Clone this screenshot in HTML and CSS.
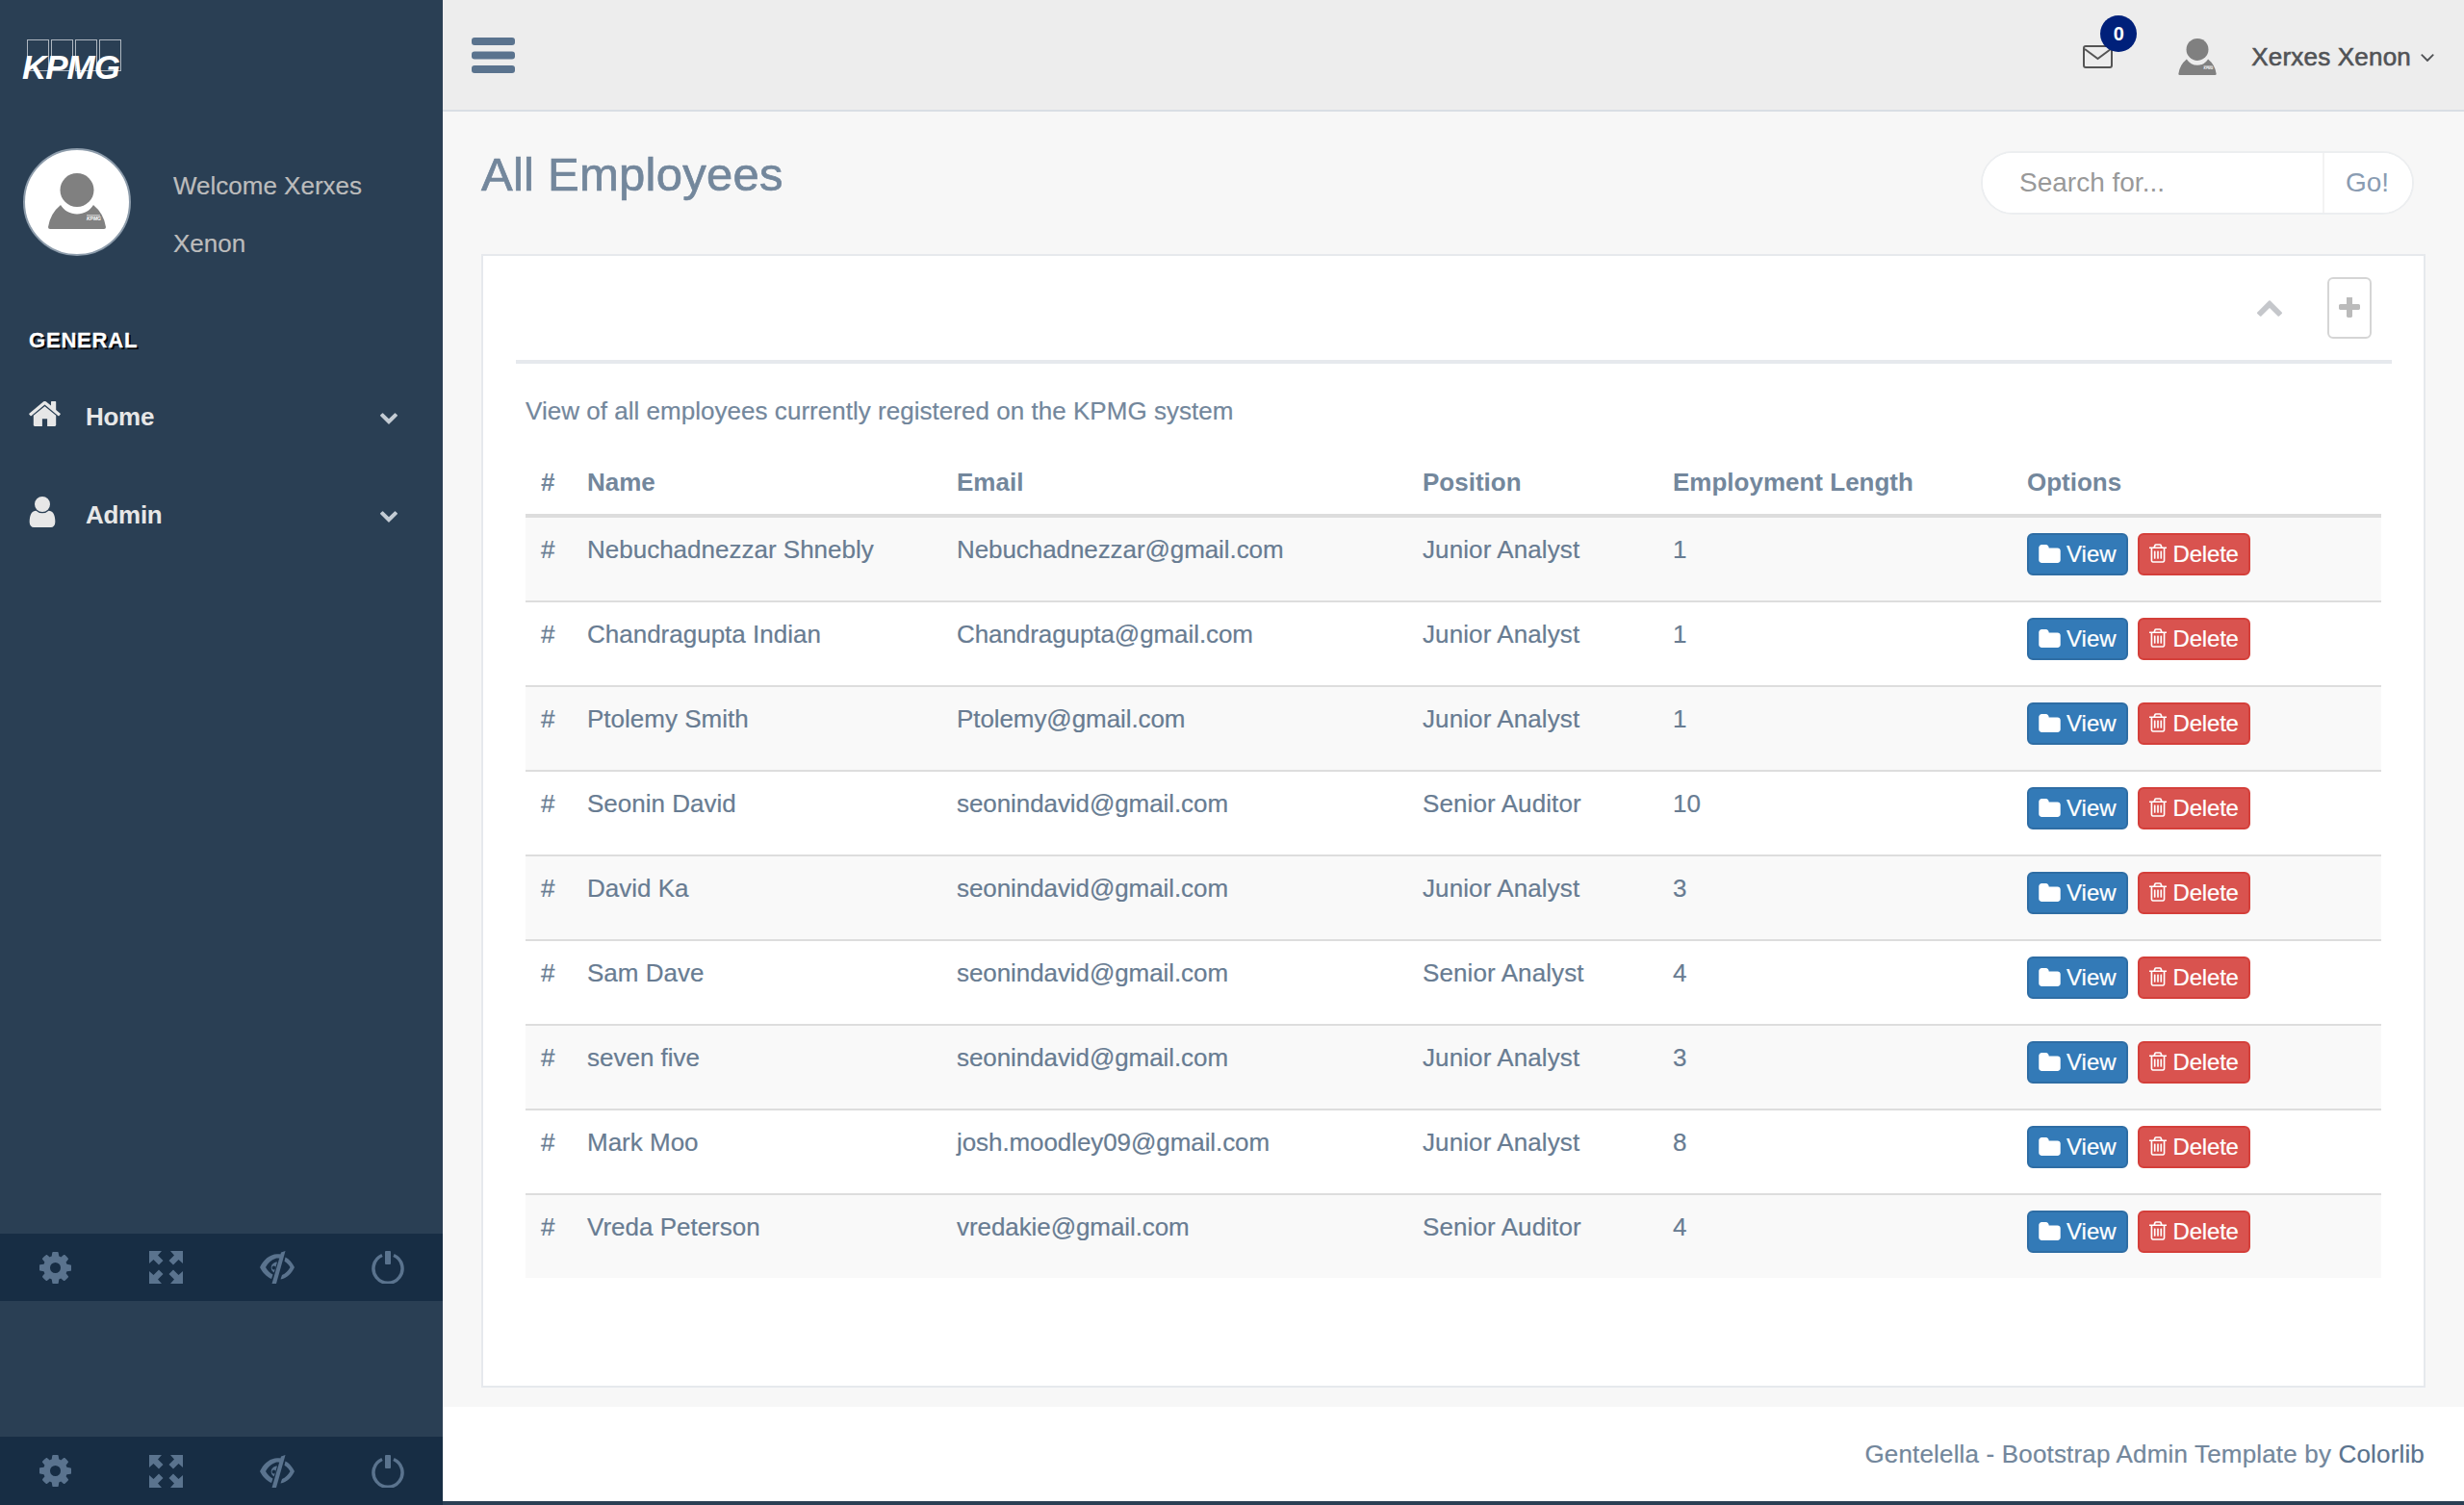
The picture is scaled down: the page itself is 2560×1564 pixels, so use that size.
FILE: index.html
```html
<!DOCTYPE html>
<html lang="en">
<head>
    <meta charset="UTF-8">
    <meta name="viewport" content="width=device-width, initial-scale=1.0">
    <title>All Employees</title>
    <link rel="stylesheet" href="styles.css">
</head>
<body>

    <!-- icon set -->
    <svg class="icon-defs" xmlns="http://www.w3.org/2000/svg">
        <symbol id="i-home" viewBox="90 256 1612 1280"><path d="M1472 992v480q0 26-19 45t-45 19h-384v-384h-256v384h-384q-26 0-45-19t-19-45v-480q0-1 .5-3t.5-3l575-474 575 474q1 2 1 6zm223-69l-62 74q-8 9-21 11h-3q-13 0-21-7l-692-577-692 577q-12 8-24 7-13-2-21-11l-62-74q-8-10-7-23.5t11-21.5l719-599q32-26 76-26t76 26l244 204v-195q0-14 9-23t23-9h192q14 0 23 9t9 23v408l219 182q10 8 11 21.5t-7 23.5z"/></symbol>
        <symbol id="i-user" viewBox="256 128 1280 1536"><path d="M1536 1399q0 109-62.5 187t-150.5 78h-854q-88 0-150.5-78t-62.5-187q0-85 8.5-160.5t31.5-152 58.5-131 94-89 134.5-34.5q131 128 313 128t313-128q76 0 134.5 34.5t94 89 58.5 131 31.5 152 8.5 160.5zm-256-887q0 159-112.5 271.5t-271.5 112.5-271.5-112.5-112.5-271.5 112.5-271.5 271.5-112.5 271.5 112.5 112.5 271.5z"/></symbol>
        <symbol id="i-chevron-down" viewBox="90 533 1612 1035"><path d="M1683 808l-742 741q-19 19-45 19t-45-19l-742-741q-19-19-19-45.5t19-45.5l166-165q19-19 45-19t45 19l531 531 531-531q19-19 45-19t45 19l166 165q19 19 19 45.5t-19 45.5z"/></symbol>
        <symbol id="i-chevron-up" viewBox="90 480 1612 1035"><path d="M1683 1331l-166 165q-19 19-45 19t-45-19l-531-531-531 531q-19 19-45 19t-45-19l-166-165q-19-19-19-45.5t19-45.5l742-741q19-19 45-19t45 19l742 741q19 19 19 45.5t-19 45.5z"/></symbol>
        <symbol id="i-angle-down" viewBox="380 570 1032 660"><path d="M1395 736q0 13-10 23l-466 466q-10 10-23 10t-23-10l-466-466q-10-10-10-23t10-23l50-50q10-10 23-10t23 10l393 393 393-393q10-10 23-10t23 10l50 50q10 10 10 23z"/></symbol>
        <symbol id="i-bars" viewBox="0 0 45 37">
            <rect x="0" y="0" width="45" height="8" rx="3"/>
            <rect x="0" y="14.500" width="45" height="8" rx="3"/>
            <rect x="0" y="29" width="45" height="8" rx="3"/>
        </symbol>
        <symbol id="i-plus" viewBox="192 192 1408 1408"><path d="M1600 736v192q0 40-28 68t-68 28h-416v416q0 40-28 68t-68 28h-192q-40 0-68-28t-28-68v-416h-416q-40 0-68-28t-28-68v-192q0-40 28-68t68-28h416v-416q0-40 28-68t68-28h192q40 0 68 28t28 68v416h416q40 0 68 28t28 68z"/></symbol>
        <symbol id="i-folder" viewBox="64 128 1664 1408"><path d="M1728 608v704q0 92-66 158t-158 66h-1216q-92 0-158-66t-66-158v-960q0-92 66-158t158-66h320q92 0 158 66t66 158v32h672q92 0 158 66t66 158z"/></symbol>
        <symbol id="i-trash" viewBox="192 128 1408 1536"><path d="M704 736v576q0 14-9 23t-23 9h-64q-14 0-23-9t-9-23v-576q0-14 9-23t23-9h64q14 0 23 9t9 23zm256 0v576q0 14-9 23t-23 9h-64q-14 0-23-9t-9-23v-576q0-14 9-23t23-9h64q14 0 23 9t9 23zm256 0v576q0 14-9 23t-23 9h-64q-14 0-23-9t-9-23v-576q0-14 9-23t23-9h64q14 0 23 9t9 23zm128 724v-948h-896v948q0 22 7 40.5t14.5 27 10.5 8.5h832q3 0 10.5-8.5t14.5-27 7-40.5zm-672-1076h448l-48-117q-7-9-17-11h-317q-10 2-17 11zm928 32v64q0 14-9 23t-23 9h-96v948q0 83-47 143.5t-113 60.5h-832q-66 0-113-58.5t-47-141.5v-952h-96q-14 0-23-9t-9-23v-64q0-14 9-23t23-9h309l70-167q15-37 54-63t79-26h320q40 0 79 26t54 63l70 167h309q14 0 23 9t9 23z"/></symbol>
        <symbol id="i-cog" viewBox="128 128 1536 1536"><path d="M1152 896q0-106-75-181t-181-75-181 75-75 181 75 181 181 75 181-75 75-181zm512-109v222q0 12-8 23t-20 13l-185 28q-19 54-39 91 35 50 107 138 10 12 10 25t-9 23q-27 37-99 108t-94 71q-12 0-26-9l-138-108q-44 23-91 38-16 136-29 186-7 28-36 28h-222q-14 0-24.5-8.5t-11.5-21.5l-28-184q-49-16-90-37l-141 107q-10 9-25 9-14 0-25-11-126-114-165-168-7-10-7-23 0-12 8-23 15-21 51-66.5t54-70.5q-27-50-41-99l-183-27q-13-2-21-12.5t-8-23.5v-222q0-12 8-23t19-13l186-28q14-46 39-92-40-57-107-138-10-12-10-24 0-10 9-23 26-36 98.5-107.5t94.5-71.5q13 0 26 10l138 107q44-23 91-38 16-136 29-186 7-28 36-28h222q14 0 24.5 8.5t11.5 21.5l28 184q49 16 90 37l142-107q9-9 24-9 13 0 25 10 129 119 165 170 7 8 7 22 0 12-8 23-15 21-51 66.5t-54 70.5q26 50 41 98l183 28q13 2 21 12.5t8 23.5z"/></symbol>
        <symbol id="i-fullscreen" viewBox="0 0 35 34">
            <path d="M0 0h13l-4 4.500 5.500 5.500-4.500 4.500-5.500-5.500-4.500 4z"/>
            <path d="M35 0h-13l4 4.500-5.500 5.500 4.500 4.500 5.500-5.500 4.500 4z"/>
            <path d="M0 34h13l-4-4.500 5.500-5.500-4.500-4.500-5.500 5.500-4.500-4z"/>
            <path d="M35 34h-13l4-4.500-5.500-5.500 4.500-4.500 5.500 5.500 4.500-4z"/>
        </symbol>
        <symbol id="i-eye-close" viewBox="0 0 36 34">
            <path fill-rule="evenodd" d="M22 3.500l-1.300 4.500c-1.500-.5-3-.6-4.700 0-4 1.200-7.500 4.500-10 9 2 3.500 4.500 6 7.500 7.500l-1.400 4.500c-5-2-9.300-6.500-12.100-12 3.500-7.500 10-13.500 18-13.700 1.500 0 3 0 4 .2zm-6.500 8.500c-2.500 1-4 3.200-3.800 5.800.2 2 1.300 3.700 3 4.700l3.300-11c-.8 0-1.700 0-2.500.5zm-1 3.500a2 2 0 1 0 2 2 2 2 0 0 0-2-2z"/>
            <path d="M26.500 0l-9.500 34h-4.500l9.500-32.500z"/>
            <path d="M26.500 6.500c4 2 7.300 6 9.500 10.500-3 6.500-8 11.500-14.500 12.500l1.500-4.500c3.500-1.500 6.500-4.300 8.500-8-1.500-2.600-3.500-4.800-6-6.200z"/>
        </symbol>
        <symbol id="i-power" viewBox="0 0 34 34">
            <path d="M11 4.500a15 15 0 1 0 12 0" fill="none" stroke="currentColor" stroke-width="3.500"/>
            <rect x="14" y="0" width="6" height="14" rx="1"/>
        </symbol>
        <symbol id="i-envelope" viewBox="0 0 31 24">
            <rect x="1" y="1" width="29" height="22" rx="2" fill="none" stroke="currentColor" stroke-width="2"/>
            <path d="M2 4l13.500 10L29 4" fill="none" stroke="currentColor" stroke-width="2"/>
        </symbol>
        <symbol id="i-person" viewBox="0 0 60 58">
            <circle cx="30" cy="17.500" r="17.500"/>
            <path d="M0 56Q2 42 13 33A20 20 0 0 0 47 33Q58 42 60 56Q60 58 58 58H2Q0 58 0 56Z"/>
            <rect x="40" y="43" width="14" height="1.500" fill="#fff" opacity=".5"/>
            <text x="40" y="49" class="tiny-logo">KPMG</text>
        </symbol>
    </svg>

    <div class="layout">

        <aside class="sidebar">
            <div class="logo">
                <svg width="110" height="50" viewBox="0 0 110 50">
                    <g class="logo-boxes">
                        <rect x="6.500" y="0.500" width="22" height="32"/>
                        <rect x="31.500" y="0.500" width="22" height="32"/>
                        <rect x="56.500" y="0.500" width="22" height="32"/>
                        <rect x="81.500" y="0.500" width="22" height="32"/>
                    </g>
                    <text x="1" y="41" class="logo-text">KPMG</text>
                </svg>
            </div>

            <div class="profile">
                <div class="avatar">
                    <svg class="avatar-person"><use href="#i-person"/></svg>
                </div>
                <div class="welcome">Welcome Xerxes Xenon</div>
            </div>

            <h3 class="menu-title">General</h3>
            <ul class="side-menu">
                <li>
                    <svg class="menu-icon home"><use href="#i-home"/></svg>
                    <span>Home</span>
                    <svg class="menu-chevron"><use href="#i-chevron-down"/></svg>
                </li>
                <li>
                    <svg class="menu-icon user"><use href="#i-user"/></svg>
                    <span>Admin</span>
                    <svg class="menu-chevron"><use href="#i-chevron-down"/></svg>
                </li>
            </ul>

            <div class="sidebar-footer first">
                <a><svg class="ft-cog"><use href="#i-cog"/></svg></a>
                <a><svg class="ft-full"><use href="#i-fullscreen"/></svg></a>
                <a><svg class="ft-eye"><use href="#i-eye-close"/></svg></a>
                <a><svg class="ft-power"><use href="#i-power"/></svg></a>
            </div>
            <div class="sidebar-footer last">
                <a><svg class="ft-cog"><use href="#i-cog"/></svg></a>
                <a><svg class="ft-full"><use href="#i-fullscreen"/></svg></a>
                <a><svg class="ft-eye"><use href="#i-eye-close"/></svg></a>
                <a><svg class="ft-power"><use href="#i-power"/></svg></a>
            </div>
        </aside>

        <div class="main">
            <header class="topbar">
                <svg class="toggle"><use href="#i-bars"/></svg>
                <div class="top-right">
                    <div class="mail">
                        <svg class="mail-icon"><use href="#i-envelope"/></svg>
                        <span class="badge">0</span>
                    </div>
                    <svg class="top-person"><use href="#i-person"/></svg>
                    <span class="top-name">Xerxes Xenon</span>
                    <svg class="top-angle"><use href="#i-angle-down"/></svg>
                </div>
            </header>

            <main class="content">
                <div class="page-title">
                    <h1>All Employees</h1>
                    <div class="search">
                        <input type="text" placeholder="Search for...">
                        <button>Go!</button>
                    </div>
                </div>

                <section class="panel">
                    <div class="panel-toolbar">
                        <svg class="collapse"><use href="#i-chevron-up"/></svg>
                        <div class="add-box"><svg><use href="#i-plus"/></svg></div>
                    </div>
                    <div class="panel-body">
                        <p class="lead">View of all employees currently registered on the KPMG system</p>
                        <table class="employees">
                            <colgroup>
                                <col class="c-num"><col class="c-name"><col class="c-email"><col class="c-pos"><col class="c-len"><col class="c-opt">
                            </colgroup>
                            <thead>
                                <tr><th>#</th><th>Name</th><th>Email</th><th>Position</th><th>Employment Length</th><th>Options</th></tr>
                            </thead>
                            <tbody>
                                <tr>
                                    <td>#</td><td>Nebuchadnezzar Shnebly</td><td>Nebuchadnezzar@gmail.com</td><td>Junior Analyst</td><td>1</td>
                                    <td><a class="btn btn-view"><svg><use href="#i-folder"/></svg>View</a><a class="btn btn-delete"><svg><use href="#i-trash"/></svg>Delete</a></td>
                                </tr>
                                <tr>
                                    <td>#</td><td>Chandragupta Indian</td><td>Chandragupta@gmail.com</td><td>Junior Analyst</td><td>1</td>
                                    <td><a class="btn btn-view"><svg><use href="#i-folder"/></svg>View</a><a class="btn btn-delete"><svg><use href="#i-trash"/></svg>Delete</a></td>
                                </tr>
                                <tr>
                                    <td>#</td><td>Ptolemy Smith</td><td>Ptolemy@gmail.com</td><td>Junior Analyst</td><td>1</td>
                                    <td><a class="btn btn-view"><svg><use href="#i-folder"/></svg>View</a><a class="btn btn-delete"><svg><use href="#i-trash"/></svg>Delete</a></td>
                                </tr>
                                <tr>
                                    <td>#</td><td>Seonin David</td><td>seonindavid@gmail.com</td><td>Senior Auditor</td><td>10</td>
                                    <td><a class="btn btn-view"><svg><use href="#i-folder"/></svg>View</a><a class="btn btn-delete"><svg><use href="#i-trash"/></svg>Delete</a></td>
                                </tr>
                                <tr>
                                    <td>#</td><td>David Ka</td><td>seonindavid@gmail.com</td><td>Junior Analyst</td><td>3</td>
                                    <td><a class="btn btn-view"><svg><use href="#i-folder"/></svg>View</a><a class="btn btn-delete"><svg><use href="#i-trash"/></svg>Delete</a></td>
                                </tr>
                                <tr>
                                    <td>#</td><td>Sam Dave</td><td>seonindavid@gmail.com</td><td>Senior Analyst</td><td>4</td>
                                    <td><a class="btn btn-view"><svg><use href="#i-folder"/></svg>View</a><a class="btn btn-delete"><svg><use href="#i-trash"/></svg>Delete</a></td>
                                </tr>
                                <tr>
                                    <td>#</td><td>seven five</td><td>seonindavid@gmail.com</td><td>Junior Analyst</td><td>3</td>
                                    <td><a class="btn btn-view"><svg><use href="#i-folder"/></svg>View</a><a class="btn btn-delete"><svg><use href="#i-trash"/></svg>Delete</a></td>
                                </tr>
                                <tr>
                                    <td>#</td><td>Mark Moo</td><td>josh.moodley09@gmail.com</td><td>Junior Analyst</td><td>8</td>
                                    <td><a class="btn btn-view"><svg><use href="#i-folder"/></svg>View</a><a class="btn btn-delete"><svg><use href="#i-trash"/></svg>Delete</a></td>
                                </tr>
                                <tr>
                                    <td>#</td><td>Vreda Peterson</td><td>vredakie@gmail.com</td><td>Senior Auditor</td><td>4</td>
                                    <td><a class="btn btn-view"><svg><use href="#i-folder"/></svg>View</a><a class="btn btn-delete"><svg><use href="#i-trash"/></svg>Delete</a></td>
                                </tr>
                            </tbody>
                        </table>
                    </div>
                </section>
            </main>

            <footer class="footer">
                <span>Gentelella - Bootstrap Admin Template by <a>Colorlib</a></span>
            </footer>
        </div>

    </div>

</body>
</html>
```

FILE: styles.css
```css
* {
    box-sizing: border-box;
}

body {
    margin: 0;
    background: #2a3f54;
    color: #73879c;
    font-family: "Liberation Sans", Arial, sans-serif;
    font-size: 26px;
    line-height: 37px;
}

svg {
    display: block;
    fill: currentColor;
}

.icon-defs {
    display: none;
}

.layout {
    display: flex;
    height: 1564px;
}

/* sidebar */

.sidebar {
    display: flex;
    flex-direction: column;
    flex: 0 0 460px;
    background: #2a3f54;
}

.logo {
    height: 154px;
    padding: 41px 0 0 22px;
}

.logo-boxes rect {
    fill: none;
    stroke: #aeb7c0;
    stroke-width: 1;
}

.logo-text {
    fill: #fff;
    font-size: 35px;
    font-weight: bold;
    font-style: italic;
    letter-spacing: -1px;
}

.tiny-logo {
    fill: #fff;
    font-size: 5px;
    font-weight: bold;
    font-style: italic;
}

.profile {
    display: flex;
    gap: 44px;
    padding-left: 24px;
}

.avatar {
    display: flex;
    align-items: center;
    justify-content: center;
    width: 112px;
    height: 112px;
    border: 2px solid #8d9cab;
    border-radius: 50%;
    background: #fff;
    color: #808080;
    padding-bottom: 2px;
}

.avatar-person {
    width: 60px;
    height: 58px;
}

.welcome {
    width: 210px;
    margin-top: 9px;
    color: #bcbcbc;
    line-height: 60px;
    -webkit-text-stroke: 0.2px #bcbcbc;
}

.menu-title {
    margin: 56px 0 13px 30px;
    color: #fff;
    font-size: 22px;
    line-height: 30px;
    font-weight: bold;
    letter-spacing: 0.8px;
    text-transform: uppercase;
    text-shadow: 2px 2px #000;
    -webkit-text-stroke: 0.3px #fff;
}

.side-menu {
    margin: 0;
    padding: 0;
    list-style: none;
}

.side-menu li {
    display: flex;
    align-items: center;
    height: 102px;
    padding: 0 47px 0 30px;
    color: #e7e7e7;
    font-weight: bold;
    letter-spacing: -0.3px;
}

.menu-icon {
    flex: 0 0 auto;
}

.menu-icon.home {
    width: 33px;
    height: 26px;
    margin: -6px 26px 0 0;
}

.menu-icon.user {
    width: 28px;
    height: 32px;
    margin: -6px 31px 0 0;
}

.menu-chevron {
    width: 18px;
    height: 12px;
    margin: 3px 0 0 auto;
    color: #c4ccd4;
}

.sidebar-footer {
    display: flex;
    background: #172d44;
    color: #5a738e;
}

.sidebar-footer.first {
    height: 70px;
    margin-top: auto;
}

.sidebar-footer.last {
    height: 71px;
    margin-top: 141px;
}

.sidebar-footer a {
    display: flex;
    flex: 1;
    align-items: center;
    justify-content: center;
}

.ft-cog {
    width: 33px;
    height: 33px;
}

.ft-full {
    width: 35px;
    height: 34px;
}

.ft-eye {
    width: 36px;
    height: 34px;
}

.ft-power {
    width: 34px;
    height: 34px;
}

/* main column */

.main {
    display: flex;
    flex-direction: column;
    flex: 1;
    height: 1560px;
    min-width: 0;
}

.topbar {
    display: flex;
    align-items: center;
    flex: 0 0 116px;
    padding: 4px 31px 0 30px;
    background: #ededed;
    border-bottom: 2px solid #d9dee4;
}

.toggle {
    width: 45px;
    height: 37px;
    margin-top: -4px;
    color: #5a738e;
}

.top-right {
    display: flex;
    align-items: center;
    margin-left: auto;
    color: #515356;
}

.mail {
    position: relative;
    margin-right: 68px;
}

.mail-icon {
    width: 31px;
    height: 24px;
    color: #555;
}

.badge {
    position: absolute;
    left: 18px;
    top: -31px;
    width: 38px;
    height: 38px;
    border-radius: 50%;
    background: #00207a;
    color: #fff;
    font-size: 20px;
    font-weight: bold;
    line-height: 38px;
    text-align: center;
}

.top-person {
    width: 40px;
    height: 38px;
    margin-right: 36px;
    color: #808080;
}

.top-name {
    margin-right: 10px;
    letter-spacing: 0.2px;
    -webkit-text-stroke: 0.6px #515356;
}

.top-angle {
    width: 14px;
    height: 9px;
}

.content {
    display: flex;
    flex-direction: column;
    flex: 1;
    padding: 0 40px 20px;
    background: #f7f7f7;
}

.page-title {
    display: flex;
    justify-content: space-between;
    flex: 0 0 148px;
}

.page-title h1 {
    margin: 44px 0 0;
    color: #73879c;
    font-size: 49px;
    line-height: 42px;
    font-weight: normal;
    letter-spacing: 0.25px;
    -webkit-text-stroke: 0.7px #73879c;
}

.search {
    display: flex;
    width: 450px;
    height: 66px;
    margin: 41px 12px 0 0;
    border: 2px solid #eceef0;
    border-radius: 33px;
    background: #fff;
    overflow: hidden;
}

.search input {
    flex: 1;
    min-width: 0;
    padding: 0 0 0 38px;
    border: none;
    outline: none;
    background: #fff;
    font-family: inherit;
    font-size: 28px;
    color: #73879c;
}

.search input::placeholder {
    color: #999;
    opacity: 1;
}

.search button {
    flex: 0 0 93px;
    padding: 0 2px 0 0;
    border: none;
    border-left: 2px solid #f3f3f3;
    background: #fff;
    color: #8a9cb2;
    font-family: inherit;
    font-size: 28px;
}

.panel {
    flex: 1;
    padding: 0 33px 0 34px;
    background: #fff;
    border: 2px solid #e6e9ed;
}

.panel-toolbar {
    display: flex;
    justify-content: flex-end;
    align-items: flex-start;
    height: 112px;
    padding: 22px 21px 0 0;
    border-bottom: 4px solid #e6e9ed;
}

.collapse {
    width: 26px;
    height: 17px;
    margin: 24px 47px 0 0;
    color: #c5c7cb;
}

.add-box {
    display: flex;
    align-items: center;
    justify-content: center;
    width: 46px;
    height: 64px;
    border: 2px solid #d5d5d5;
    border-radius: 6px;
    color: #bbb;
}

.add-box svg {
    width: 22px;
    height: 22px;
}

.panel-body {
    padding: 0 11px 0 10px;
}

.lead {
    margin: 31px 0 37px;
    letter-spacing: 0.03px;
    -webkit-text-stroke: 0.2px #73879c;
}

.employees {
    width: 100%;
    border-collapse: separate;
    border-spacing: 0;
    table-layout: fixed;
}

.c-num { width: 48px; }
.c-name { width: 384px; }
.c-email { width: 484px; }
.c-pos { width: 260px; }
.c-len { width: 368px; }
.c-opt { width: 384px; }

.employees th {
    padding: 0 16px 14px;
    border-bottom: 4px solid #ddd;
    text-align: left;
    font-weight: bold;
}

.employees th:first-child,
.employees td:first-child {
    padding-left: 16px;
    padding-right: 0;
}

.employees td {
    padding: 16px;
    height: 88px;
    border-bottom: 2px solid #ddd;
    vertical-align: top;
    color: #687c92;
    line-height: 35px;
    white-space: nowrap;
    -webkit-text-stroke: 0.2px #687c92;
}

.employees td:nth-child(3) {
    letter-spacing: -0.08px;
}

.employees td:nth-child(4) {
    letter-spacing: 0.1px;
}

.employees tbody tr:nth-child(odd) td {
    background: #f9f9f9;
}

.employees tbody tr:last-child td {
    height: 86px;
    border-bottom: none;
}

.btn {
    display: inline-flex;
    align-items: center;
    height: 44px;
    margin-right: 10px;
    padding: 0 10px;
    border: 2px solid;
    border-radius: 6px;
    color: #fff;
    font-size: 24px;
    line-height: 36px;
    vertical-align: top;
    -webkit-text-stroke: 0.2px #fff;
}

.btn svg {
    margin-top: -2px;
}

.btn-view {
    background: #337ab7;
    border-color: #2e6da4;
}

.btn-view svg {
    width: 23px;
    height: 19px;
    margin-right: 6px;
}

.btn-delete {
    background: #d9534f;
    border-color: #d43f3a;
    letter-spacing: -0.2px;
}

.btn-delete svg {
    width: 18px;
    height: 20px;
    margin-right: 7px;
}

.footer {
    display: flex;
    align-items: center;
    justify-content: flex-end;
    flex: 0 0 98px;
    padding-right: 41px;
    background: #fff;
    letter-spacing: 0.17px;
    -webkit-text-stroke: 0.2px #73879c;
}

.footer a {
    color: #5a738e;
    -webkit-text-stroke: 0.2px #5a738e;
}
```
